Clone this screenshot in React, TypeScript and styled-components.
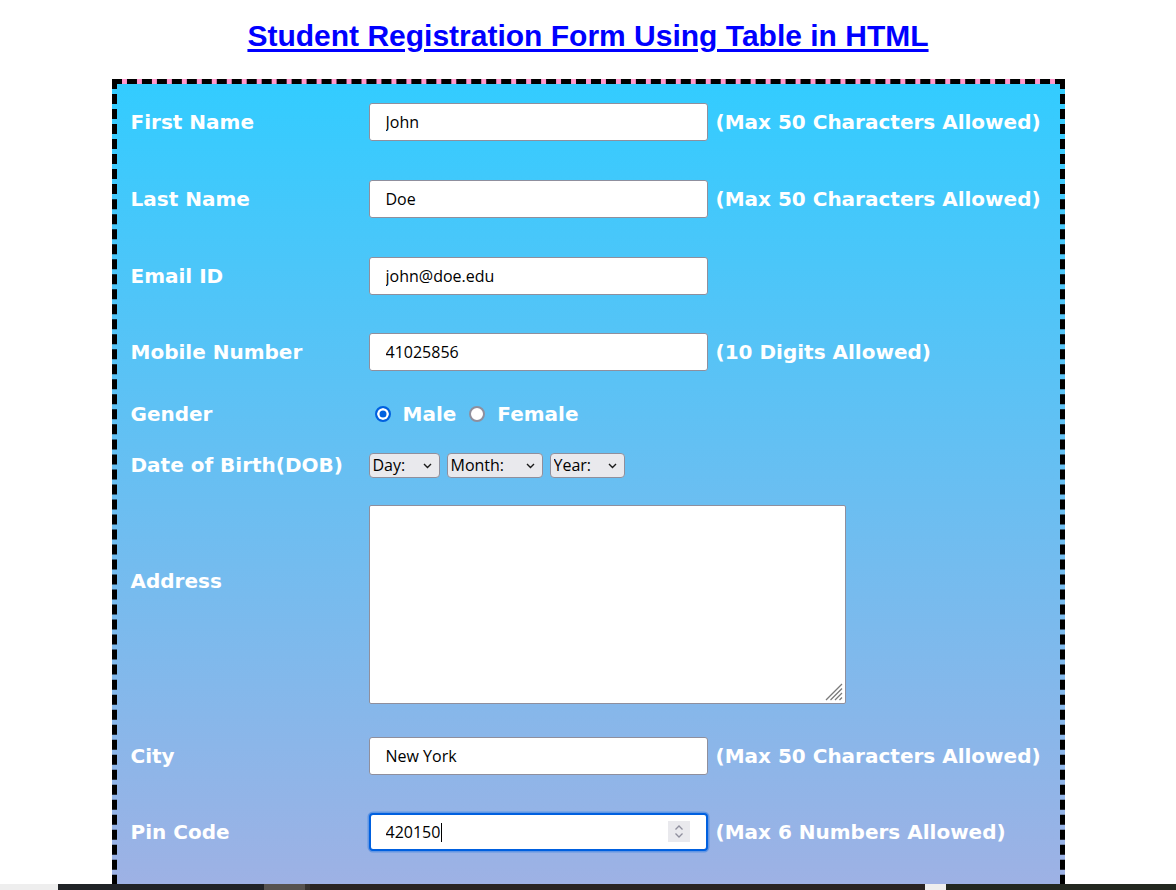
import styled, { createGlobalStyle } from "styled-components";

const GlobalStyle = createGlobalStyle`
  html {
    overflow: hidden;
  }
  body {
    margin: 0;
    background: #fff;
    font-family: "DejaVu Sans", Verdana, sans-serif;
  }
`;

const Page = styled.div`
  display: flex;
  flex-direction: column;
  align-items: center;
  padding-top: 19px;
`;

const Title = styled.h1`
  margin: 0 0 26px;
  font-family: "Liberation Sans", Arial, sans-serif;
  font-size: 30px;
  line-height: 34px;
  font-weight: bold;
  color: #0000ff;
  text-decoration: underline;
  text-underline-offset: 3px;
`;

const Form = styled.form`
  width: 953px;
  box-sizing: border-box;
  border: 5px dashed #000;
  padding-bottom: 160px;
  background: linear-gradient(#33ccff, #ff99cc);
  background-size: 100% 1530px;
  background-origin: padding-box;
  display: flex;
  flex-direction: column;
`;

const Row = styled.div<{ $h: number }>`
  display: flex;
  align-items: center;
  height: ${(p) => p.$h}px;
`;

const Label = styled.label<{ $lift?: number }>`
  flex-shrink: 0;
  width: 252px;
  box-sizing: border-box;
  padding-left: 14px;
  margin-bottom: ${(p) => p.$lift ?? 0}px;
  color: #fff;
  font-size: 20px;
  line-height: 24px;
  font-weight: bold;
  white-space: nowrap;
`;

const Field = styled.div`
  display: flex;
  align-items: center;
  gap: 8px;
`;

const TextInput = styled.input`
  width: 339px;
  height: 38px;
  box-sizing: border-box;
  margin: 0;
  padding: 0 16px;
  border: 1px solid #8f8f9d;
  border-radius: 3px;
  background: #fff;
  color: #000;
  font-family: "Open Sans", "Segoe UI", sans-serif;
  font-size: 16px;
  outline: none;
`;

const FocusWrap = styled.div`
  position: relative;
  width: 339px;
  height: 38px;
`;

const FocusInput = styled(TextInput)`
  padding-left: 15px;
  border: 2px solid #0060df;
  border-radius: 4px;
  box-shadow: 0 0 0 1.5px rgba(0, 96, 223, 0.35);
`;

const Caret = styled.span`
  position: absolute;
  left: 72px;
  top: 10px;
  width: 1px;
  height: 19px;
  background: #000;
`;

const Spinner = styled.span`
  position: absolute;
  right: 18px;
  top: 8px;
  width: 22px;
  height: 21px;
  background: #e9e9ed;
  display: flex;
  align-items: center;
  justify-content: center;
`;

const Hint = styled.span`
  color: #fff;
  font-size: 20px;
  font-weight: bold;
  white-space: nowrap;
`;

const Choices = styled.div`
  display: flex;
  align-items: center;
  gap: 12px;
  padding-left: 6px;
`;

const Radio = styled.input.attrs({ type: "radio" })`
  appearance: none;
  margin: 0;
  width: 16px;
  height: 16px;
  box-sizing: border-box;
  border-radius: 50%;
  border: 2px solid #8f8f9d;
  background: #fff;

  &:checked {
    border-color: #0060df;
    background: #0060df;
    box-shadow: inset 0 0 0 2.5px #fff;
  }
`;

const ChoiceText = styled.span`
  color: #fff;
  font-size: 20px;
  font-weight: bold;
  margin-right: 1px;
`;

const Selects = styled.div`
  display: flex;
  gap: 7px;
`;

const SelectWrap = styled.div`
  position: relative;
  display: flex;
`;

const Select = styled.select<{ $w: number }>`
  appearance: none;
  width: ${(p) => p.$w}px;
  height: 25px;
  margin: 0;
  padding: 0 0 0 3px;
  border: 1px solid #8f8f9d;
  border-radius: 4px;
  background: #e9e9ed;
  color: #000;
  font-family: "Open Sans", "Segoe UI", sans-serif;
  font-size: 16px;
`;

const Chevron = styled.svg`
  position: absolute;
  right: 8px;
  top: 10px;
  pointer-events: none;
`;

const AreaWrap = styled.div`
  position: relative;
  display: flex;
`;

const TextArea = styled.textarea`
  width: 477px;
  height: 199px;
  box-sizing: border-box;
  margin: 0;
  border: 1px solid #8f8f9d;
  border-radius: 2px;
  background: #fff;
  resize: none;
  outline: none;
`;

const Grip = styled.svg`
  position: absolute;
  right: 3px;
  bottom: 3px;
  pointer-events: none;
`;

const Strip = styled.div`
  position: fixed;
  left: 0;
  right: 0;
  bottom: 0;
  height: 6px;
  display: flex;
`;

const StripPart = styled.span<{ $w: number; $c: string }>`
  width: ${(p) => p.$w}px;
  flex-shrink: 0;
  background: ${(p) => p.$c};
`;

const ChevronDown = () => (
  <Chevron width="9" height="6" viewBox="0 0 9 6">
    <path d="M1 1l3.5 3.5L8 1" fill="none" stroke="#1a1a1a" strokeWidth="1.4" />
  </Chevron>
);

const textRows = [
  { label: "First Name", value: "John", hint: "(Max 50 Characters Allowed)", h: 76 },
  { label: "Last Name", value: "Doe", hint: "(Max 50 Characters Allowed)", h: 77 },
  { label: "Email ID", value: "john@doe.edu", hint: "", h: 77 },
  { label: "Mobile Number", value: "41025856", hint: "(10 Digits Allowed)", h: 75 },
];

const dobSelects = [
  { name: "Day:", w: 71 },
  { name: "Month:", w: 96 },
  { name: "Year:", w: 75 },
];

const strip = [
  { w: 58, c: "#eeeeee" },
  { w: 206, c: "#202327" },
  { w: 41, c: "#56524f" },
  { w: 5, c: "#36322f" },
  { w: 615, c: "#292422" },
  { w: 21, c: "#eeeeee" },
  { w: 230, c: "#232820" },
];

const App = () => (
  <>
    <GlobalStyle />
    <Page>
      <Title>Student Registration Form Using Table in HTML</Title>
      <Form onSubmit={(e) => e.preventDefault()}>
        {textRows.map((row) => (
          <Row $h={row.h} key={row.label}>
            <Label>{row.label}</Label>
            <Field>
              <TextInput defaultValue={row.value} />
              {row.hint && <Hint>{row.hint}</Hint>}
            </Field>
          </Row>
        ))}

        <Row $h={50}>
          <Label>Gender</Label>
          <Choices>
            <Radio name="gender" defaultChecked />
            <ChoiceText>Male</ChoiceText>
            <Radio name="gender" />
            <ChoiceText>Female</ChoiceText>
          </Choices>
        </Row>

        <Row $h={52}>
          <Label>Date of Birth(DOB)</Label>
          <Selects>
            {dobSelects.map((s) => (
              <SelectWrap key={s.name}>
                <Select $w={s.w}>
                  <option>{s.name}</option>
                </Select>
                <ChevronDown />
              </SelectWrap>
            ))}
          </Selects>
        </Row>

        <Row $h={226}>
          <Label $lift={47}>Address</Label>
          <AreaWrap>
            <TextArea />
            <Grip width="18" height="18" viewBox="0 0 18 18">
              <path
                d="M17 1L1 17M17 5.5L5.5 17M17 10L10 17M17 14.5L14.5 17"
                stroke="#7a7a7a"
                strokeWidth="1.3"
              />
            </Grip>
          </AreaWrap>
        </Row>

        <Row $h={77}>
          <Label>City</Label>
          <Field>
            <TextInput defaultValue="New York" />
            <Hint>(Max 50 Characters Allowed)</Hint>
          </Field>
        </Row>

        <Row $h={76}>
          <Label>Pin Code</Label>
          <Field>
            <FocusWrap>
              <FocusInput defaultValue="420150" />
              <Caret />
              <Spinner>
                <svg width="10" height="15" viewBox="0 0 10 15">
                  <path d="M1.5 5.5L5 2l3.5 3.5M1.5 9.5L5 13l3.5-3.5" fill="none" stroke="#8f8f9d" strokeWidth="1.3" />
                </svg>
              </Spinner>
            </FocusWrap>
            <Hint>(Max 6 Numbers Allowed)</Hint>
          </Field>
        </Row>
      </Form>
    </Page>
    <Strip>
      {strip.map((s, i) => (
        <StripPart key={i} $w={s.w} $c={s.c} />
      ))}
    </Strip>
  </>
);

export default App;
